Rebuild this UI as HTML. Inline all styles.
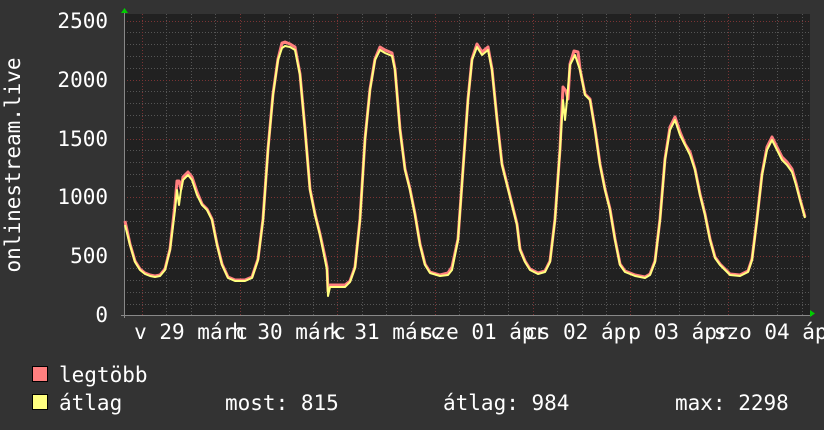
<!DOCTYPE html>
<html><head><meta charset="utf-8"><style>
html,body{margin:0;padding:0;background:#333;}
svg{display:block}
text{font-family:"DejaVu Sans Mono","Liberation Mono",monospace;fill:#fff}
</style></head><body>
<svg width="824" height="430" viewBox="0 0 824 430" xmlns="http://www.w3.org/2000/svg">
<rect width="824" height="430" fill="#333"/>
<rect x="124" y="14" width="686" height="301" fill="#212121"/>
<g stroke="#555" stroke-width="1" stroke-dasharray="1,2">
<path d="M124 32.5H810M124 44.5H810M124 56.5H810M124 68.5H810M124 91.5H810M124 103.5H810M124 115.5H810M124 127.5H810M124 150.5H810M124 162.5H810M124 174.5H810M124 186.5H810M124 209.5H810M124 221.5H810M124 233.5H810M124 245.5H810M124 268.5H810M124 280.5H810M124 292.5H810M124 304.5H810"/>
<path d="M166.5 14V315M191.5 14V315M215.5 14V315M264.5 14V315M289.5 14V315M313.5 14V315M362.5 14V315M386.5 14V315M411.5 14V315M459.5 14V315M484.5 14V315M508.5 14V315M557.5 14V315M582.5 14V315M606.5 14V315M655.5 14V315M679.5 14V315M704.5 14V315M753.5 14V315M777.5 14V315M802.5 14V315"/>
</g>
<g stroke="#7a3434" stroke-width="1" stroke-dasharray="1,2">
<path d="M124 21.5H810M124 80.5H810M124 139.5H810M124 197.5H810M124 256.5H810"/>
<path d="M142.5 14V315M240.5 14V315M337.5 14V315M435.5 14V315M533.5 14V315M630.5 14V315M728.5 14V315"/>
</g>
<path d="M121 315.5H812M124.5 12V318" stroke="#888" stroke-width="1"/>
<path d="M121 8L124.5 13L128 8Z" fill="#0c0" transform="rotate(180 124.5 10.5)"/>
<path d="M810 310L815 313.5L810 317Z" fill="#0c0"/>
<polyline fill="none" stroke="#ff7f7f" stroke-width="3" stroke-linejoin="round" transform="translate(0,-1)" points="125,222 130,245 135,262 140,270 145,274 150,276 155,277 160,276 165,270 170,250 175,205 177,182 179,182 181,190 183,178 188,173 192,178 197,193 202,205 207,210 212,220 217,245 222,265 228,278 235,281 245,281 252,278 258,260 263,220 268,150 273,95 278,60 282,44 285,43 290,45 295,48 300,75 305,130 310,190 315,215 320,235 325,258 327,268 328,292 330,286 335,286 345,286 350,282 355,268 360,220 365,140 370,90 375,60 380,48 385,51 392,54 395,70 400,130 405,170 410,190 415,215 420,245 425,265 430,273 440,276 448,274 452,268 458,240 463,170 468,100 472,60 477,45 482,53 488,48 492,70 497,120 502,165 507,185 512,205 517,225 520,250 525,262 530,270 538,274 545,272 550,262 555,220 560,150 563,88 566,92 568,100 570,65 574,52 578,53 580,70 585,95 590,100 595,130 600,165 605,190 610,210 615,240 620,265 625,272 635,276 645,278 650,275 655,262 660,220 665,160 670,128 675,118 680,133 685,145 690,153 695,170 700,195 705,215 710,240 715,258 720,265 725,270 730,275 740,276 748,272 752,260 757,220 762,175 767,148 772,138 777,148 782,158 787,163 792,170 796,184 800,200 805,218"/>
<polyline fill="none" stroke="#ffff7f" stroke-width="2" stroke-linejoin="round" points="125,225 130,245 135,262 140,270 145,274 150,276 155,277 160,276 165,270 170,250 175,210 177,190 179,205 181,190 183,180 188,175 192,180 197,195 202,205 207,210 212,220 217,245 222,265 228,278 235,281 245,281 252,278 258,260 263,220 268,150 273,95 278,60 282,48 285,46 290,47 295,50 300,75 305,130 310,190 315,215 320,235 325,260 327,270 328,296 330,287 335,287 345,287 350,282 355,268 360,220 365,140 370,90 375,60 380,50 385,53 392,56 395,70 400,130 405,170 410,190 415,215 420,245 425,265 430,273 440,276 448,275 452,270 458,240 463,170 468,100 472,60 477,47 482,55 488,50 492,70 497,120 502,165 507,185 512,205 517,225 520,250 525,262 530,270 538,274 545,272 550,262 555,220 560,150 563,100 565,120 567,100 570,65 575,55 580,70 585,95 590,100 595,130 600,165 605,190 610,210 615,240 620,265 625,272 635,276 645,278 650,275 655,262 660,220 665,160 670,130 675,120 680,135 685,145 690,155 695,170 700,195 705,215 710,240 715,258 720,265 725,270 730,275 740,276 748,272 752,260 757,220 762,175 767,150 772,140 777,150 782,160 787,165 792,172 796,185 800,200 805,218"/>
<g font-size="21" text-anchor="end">
<text x="108" y="28">2500</text>
<text x="108" y="87">2000</text>
<text x="108" y="146">1500</text>
<text x="108" y="204">1000</text>
<text x="108" y="263">500</text>
<text x="108" y="322">0</text>
</g>
<text font-size="21" transform="translate(20,165) rotate(-90)" text-anchor="middle">onlinestream.live</text>
<g font-size="21" text-anchor="middle">
<text x="191" y="339">v 29 márc</text>
<text x="289" y="339">h 30 márc</text>
<text x="386" y="339">k 31 márc</text>
<text x="484" y="339">sze 01 ápr</text>
<text x="582" y="339">cs 02 ápr</text>
<text x="679" y="339">p 03 ápr</text>
<text x="777" y="339">szo 04 ápr</text>
</g>
<rect x="32.5" y="366.5" width="15" height="15" fill="#ff7f7f" stroke="#000"/>
<rect x="32.5" y="394.5" width="15" height="15" fill="#ffff7f" stroke="#000"/>
<g font-size="21">
<text x="59" y="382">legtöbb</text>
<text x="59" y="410">átlag</text>
<text x="225" y="410">most: 815</text>
<text x="443" y="410">átlag: 984</text>
<text x="675" y="410">max: 2298</text>
</g>
</svg>
</body></html>
